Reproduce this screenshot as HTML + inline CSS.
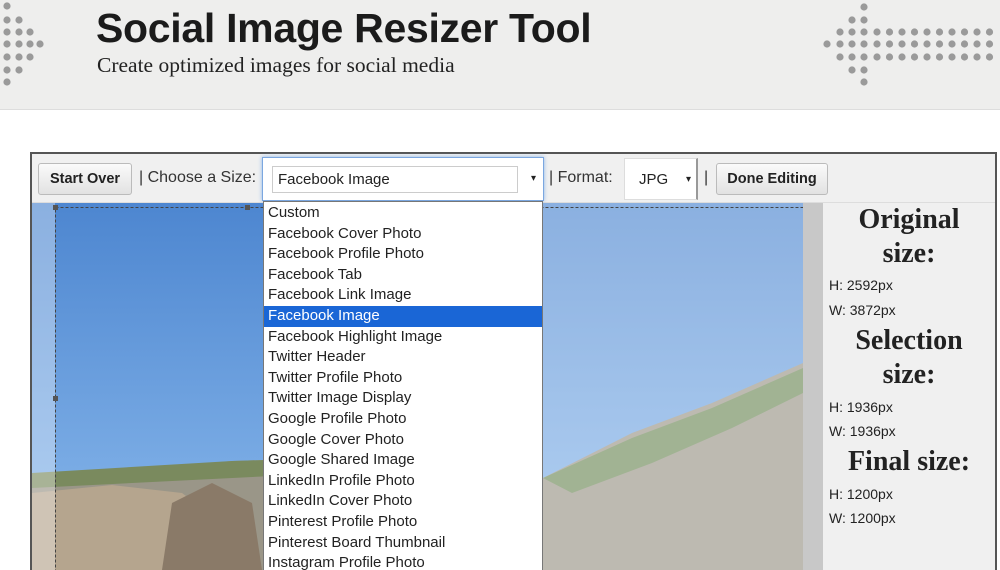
<!DOCTYPE html>
<html><head><meta charset="utf-8"><style>
*{margin:0;padding:0;box-sizing:border-box}
html,body{width:1000px;height:570px;overflow:hidden}
body{background:#fff;position:relative;font-family:"Liberation Sans",sans-serif}
.hdr{position:absolute;left:0;top:0;width:1000px;height:110px;background:#eeeeed;border-bottom:1px solid #ddd}
.title{position:absolute;left:96px;top:5px;font-size:41px;font-weight:bold;color:#1b1b1b;letter-spacing:-0.3px}
.sub{position:absolute;left:97px;top:53px;font-family:"Liberation Serif",serif;font-size:21.5px;color:#222}
.panel{position:absolute;left:30px;top:152px;width:967px;height:418px;border:2px solid #555;border-bottom:none;background:#f0f0f0}
.tb{position:absolute;font-size:16px;color:#333}
.btn{position:absolute;top:163px;height:32px;border:1px solid #bbb;border-radius:3px;background:linear-gradient(#fafafa,#e2e2e2);font-weight:bold;font-size:14.5px;color:#222;text-align:center;line-height:30px}
.list{position:absolute;left:263px;top:201px;width:280px;height:369px;overflow:hidden;background:#fff;border:1px solid #777;border-bottom:none;font-size:15px;color:#222;padding-top:1px}
.list div{height:20.6px;line-height:20.6px;padding-left:4px;white-space:nowrap}
.list .sel{background:#1a66d6;color:#fff}
.rp{position:absolute;left:823px;top:203px;width:172px;height:367px;background:#f0f0f0}
.h{position:absolute;width:172px;text-align:center;font-family:"Liberation Serif",serif;font-weight:bold;font-size:28px;color:#222;line-height:34px}
.d{position:absolute;left:6px;font-size:14px;color:#222}
</style></head><body>
<div class="hdr">
<svg width="1000" height="110" style="position:absolute;left:0;top:0">
<g fill="#9a9a9a">
<circle cx="7" cy="6" r="3.6"/>
<circle cx="7" cy="20" r="3.6"/><circle cx="19" cy="20" r="3.6"/>
<circle cx="7" cy="32" r="3.6"/><circle cx="19" cy="32" r="3.6"/><circle cx="30" cy="32" r="3.6"/>
<circle cx="7" cy="44" r="3.6"/><circle cx="19" cy="44" r="3.6"/><circle cx="30" cy="44" r="3.6"/><circle cx="40" cy="44" r="3.6"/>
<circle cx="7" cy="57" r="3.6"/><circle cx="19" cy="57" r="3.6"/><circle cx="30" cy="57" r="3.6"/>
<circle cx="7" cy="70" r="3.6"/><circle cx="19" cy="70" r="3.6"/>
<circle cx="7" cy="82" r="3.6"/>
<circle cx="827" cy="44" r="3.6"/>
<circle cx="840" cy="32" r="3.6"/><circle cx="840" cy="44" r="3.6"/><circle cx="840" cy="57" r="3.6"/>
<circle cx="852" cy="20" r="3.6"/><circle cx="852" cy="32" r="3.6"/><circle cx="852" cy="44" r="3.6"/><circle cx="852" cy="57" r="3.6"/><circle cx="852" cy="70" r="3.6"/>
<circle cx="864" cy="7" r="3.6"/><circle cx="864" cy="20" r="3.6"/><circle cx="864" cy="32" r="3.6"/><circle cx="864" cy="44" r="3.6"/><circle cx="864" cy="57" r="3.6"/><circle cx="864" cy="70" r="3.6"/><circle cx="864" cy="82" r="3.6"/>
</g>
<g fill="#9a9a9a">
<circle cx="877" cy="32" r="3.6"/><circle cx="877" cy="44" r="3.6"/><circle cx="877" cy="57" r="3.6"/>
<circle cx="889.5" cy="32" r="3.6"/><circle cx="889.5" cy="44" r="3.6"/><circle cx="889.5" cy="57" r="3.6"/>
<circle cx="902" cy="32" r="3.6"/><circle cx="902" cy="44" r="3.6"/><circle cx="902" cy="57" r="3.6"/>
<circle cx="914.5" cy="32" r="3.6"/><circle cx="914.5" cy="44" r="3.6"/><circle cx="914.5" cy="57" r="3.6"/>
<circle cx="927" cy="32" r="3.6"/><circle cx="927" cy="44" r="3.6"/><circle cx="927" cy="57" r="3.6"/>
<circle cx="939.5" cy="32" r="3.6"/><circle cx="939.5" cy="44" r="3.6"/><circle cx="939.5" cy="57" r="3.6"/>
<circle cx="952" cy="32" r="3.6"/><circle cx="952" cy="44" r="3.6"/><circle cx="952" cy="57" r="3.6"/>
<circle cx="964.5" cy="32" r="3.6"/><circle cx="964.5" cy="44" r="3.6"/><circle cx="964.5" cy="57" r="3.6"/>
<circle cx="977" cy="32" r="3.6"/><circle cx="977" cy="44" r="3.6"/><circle cx="977" cy="57" r="3.6"/>
<circle cx="989.5" cy="32" r="3.6"/><circle cx="989.5" cy="44" r="3.6"/><circle cx="989.5" cy="57" r="3.6"/>
</g>
</svg>
<div class="title">Social Image Resizer Tool</div>
<div class="sub">Create optimized images for social media</div>
</div>
<div class="panel"></div>
<svg width="771" height="367" style="position:absolute;left:32px;top:203px">
<defs><linearGradient id="sky" x1="0" y1="0" x2="0" y2="1"><stop offset="0" stop-color="#4d86d0"/><stop offset="1" stop-color="#8ab9ec"/></linearGradient></defs>
<rect width="771" height="367" fill="url(#sky)"/>
<polygon points="0,280 60,270 200,258 300,255 511,275 600,230 680,200 771,160 771,367 0,367" fill="#9a9688"/>
<polygon points="0,290 80,282 150,290 190,320 220,367 0,367" fill="#b5a58e"/>
<polygon points="140,300 180,280 220,300 230,367 130,367" fill="#8a7a68"/>
<polygon points="511,275 600,235 680,205 771,165 771,190 700,225 620,260 540,290" fill="#6f8a5a"/>
<polygon points="0,270 200,258 300,255 300,270 0,285" fill="#7a8a5e"/>
<rect x="0" y="0" width="23" height="367" fill="#fff" opacity="0.35"/>
<rect x="511" y="0" width="260" height="367" fill="#fff" opacity="0.35"/>
<rect x="23.5" y="4.5" width="900" height="400" fill="none" stroke="#444" stroke-dasharray="3,2"/>
<rect x="21" y="2" width="5" height="5" fill="#555"/><rect x="213" y="2" width="5" height="5" fill="#555"/><rect x="21" y="193" width="5" height="5" fill="#555"/>
</svg>
<div style="position:absolute;left:803px;top:203px;width:20px;height:367px;background:#c8c8c8"></div>
<div style="position:absolute;left:32px;top:154px;width:963px;height:49px;background:#f0f0f0;border-bottom:1px solid #ddd"></div>
<div class="btn" style="left:38px;width:94px">Start Over</div>
<div class="tb" style="left:139px;top:169px">| Choose a Size:</div>
<div style="position:absolute;left:262px;top:157px;width:282px;height:44px;background:#fff;border:1px solid #7ba7e0;box-shadow:0 0 4px #8ab4ea"></div>
<div style="position:absolute;left:272px;top:166px;width:246px;height:27px;border:1px solid #ccc;font-size:15px;line-height:25px;padding-left:5px;color:#222">Facebook Image</div>
<div style="position:absolute;left:531px;top:173px;font-size:10px;color:#222">▾</div>
<div class="tb" style="left:549px;top:169px">| Format:</div>
<div style="position:absolute;left:624px;top:158px;width:74px;height:42px;background:#fff;border:1px solid #ddd;border-right:2px solid #999;font-size:15px;line-height:42px;padding-left:14px;color:#222">JPG</div>
<div style="position:absolute;left:686px;top:174px;font-size:10px;color:#222">▾</div>
<div class="tb" style="left:704px;top:169px">|</div>
<div class="btn" style="left:716px;width:112px">Done Editing</div>
<div class="list">
<div>Custom</div><div>Facebook Cover Photo</div><div>Facebook Profile Photo</div><div>Facebook Tab</div><div>Facebook Link Image</div><div class="sel">Facebook Image</div><div>Facebook Highlight Image</div><div>Twitter Header</div><div>Twitter Profile Photo</div><div>Twitter Image Display</div><div>Google Profile Photo</div><div>Google Cover Photo</div><div>Google Shared Image</div><div>LinkedIn Profile Photo</div><div>LinkedIn Cover Photo</div><div>Pinterest Profile Photo</div><div>Pinterest Board Thumbnail</div><div>Instagram Profile Photo</div>
</div>
<div class="rp">
<div class="h" style="top:0">Original<br>size:</div>
<div class="d" style="top:74px">H: 2592px</div>
<div class="d" style="top:99px">W: 3872px</div>
<div class="h" style="top:121px">Selection<br>size:</div>
<div class="d" style="top:196px">H: 1936px</div>
<div class="d" style="top:220px">W: 1936px</div>
<div class="h" style="top:242px">Final size:</div>
<div class="d" style="top:283px">H: 1200px</div>
<div class="d" style="top:307px">W: 1200px</div>
</div>
</body></html>
